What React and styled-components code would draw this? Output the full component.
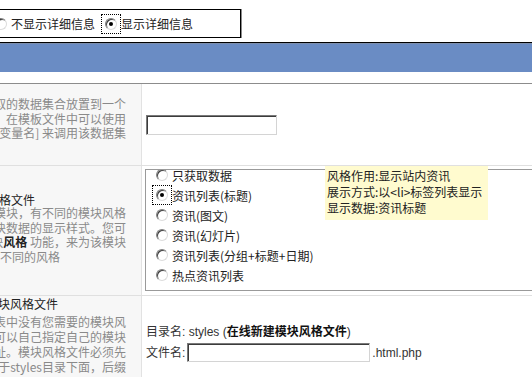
import styled, { createGlobalStyle } from "styled-components";

const GlobalStyle = createGlobalStyle`
  html, body {
    margin: 0;
    padding: 0;
    background: #fff;
    overflow: hidden;
  }
  body {
    font-family: "Liberation Sans", "Noto Sans CJK SC", sans-serif;
    font-size: 12px;
    color: #333;
  }
`;

const Page = styled.div`
  width: 532px;
  height: 377px;
  overflow: hidden;
`;

const TopStrip = styled.div`
  height: 42px;
  padding-top: 9px;
  box-sizing: border-box;
`;

const ModeBox = styled.div`
  margin-left: -12px;
  width: 253px;
  height: 29px;
  box-sizing: border-box;
  border: 1px solid #000;
  box-shadow: 1px 0 0 #8a8a8a;
  display: flex;
  align-items: center;
  padding-left: 2px;
  background: #fff;
`;

const ModeItem = styled.label`
  display: flex;
  align-items: center;
  margin-left: ${(p) => p.$offset || 0}px;
  color: #222;
  white-space: nowrap;
`;

const FocusBox = styled.span`
  display: flex;
  align-items: center;
  justify-content: center;
  flex: none;
  width: 20px;
  height: 20px;
  box-sizing: border-box;
  border: 1px dotted ${(p) => (p.$focus ? "#000" : "transparent")};
`;

const RadioDot = styled.span`
  width: 12px;
  height: 12px;
  box-sizing: border-box;
  border-radius: 50%;
  border: 1px solid;
  border-color: #808080 #dcdcdc #dcdcdc #808080;
  box-shadow: inset 1px 1px 0 #404040;
  background: #fff;
  display: flex;
  align-items: center;
  justify-content: center;

  &::after {
    content: "";
    width: 4px;
    height: 4px;
    border-radius: 50%;
    background: #000;
    display: ${(p) => (p.$checked ? "block" : "none")};
  }
`;

const Radio = ({ checked, focus }) => (
  <FocusBox $focus={focus}>
    <RadioDot $checked={checked} />
  </FocusBox>
);

const Band = styled.div`
  height: 30px;
  border-top: 1px solid #000;
  box-sizing: border-box;
  background: #6a8cc4;
  box-shadow: inset 0 1px 0 #7d8fae;
`;

const Gap = styled.div`
  height: 11px;
`;

const Table = styled.div`
  border-top: 1px solid #8c8c8c;
`;

const Row = styled.div`
  display: grid;
  grid-template-columns: 142px 1fr;
  height: ${(p) => p.$h}px;
  border-bottom: 1px solid #e0e0e0;
`;

const LeftCell = styled.div`
  background: #f7f7f7;
  border-right: 1px solid #e2e2e2;
  overflow: hidden;
  padding: ${(p) => p.$pt}px 15px 0 0;
`;

const RightCell = styled.div`
  position: relative;
  background: #fff;
  padding-left: 4px;
  display: flex;
  flex-direction: column;
  justify-content: ${(p) => (p.$center ? "center" : "flex-start")};
  padding-top: ${(p) => p.$pt || 0}px;
  overflow: hidden;
`;

const LineBox = styled.div`
  display: flex;
  justify-content: ${(p) => (p.$start ? "flex-start" : "flex-end")};
  white-space: nowrap;
  line-height: ${(p) => p.$lh || 14.5}px;
  height: ${(p) => p.$lh || 14.5}px;
  margin-left: ${(p) => p.$shift || 0}px;
  margin-bottom: ${(p) => p.$mb || 0}px;
  color: ${(p) => (p.$label ? "#222" : "#8a8a8a")};
  font-family: "Noto Sans CJK SC", sans-serif;

  b {
    color: #222;
    font-weight: 700;
  }
`;

const Line = ({ children, ...rest }) => (
  <LineBox {...rest}>
    <span>{children}</span>
  </LineBox>
);

const TextInput = styled.div`
  width: ${(p) => p.$w}px;
  height: ${(p) => p.$h}px;
  box-sizing: border-box;
  border: 1px solid;
  border-color: #7a7a7a #d4d4d4 #d4d4d4 #7a7a7a;
  box-shadow: inset 1px 1px 0 #3c3c3c;
  background: #fff;
  flex: none;
`;

const StyleBox = styled.div`
  margin: 3px 0 0 -1px;
  width: 420px;
  height: 122px;
  box-sizing: border-box;
  border: 1px solid #9a9a9a;
  overflow: hidden;
`;

const OptionList = styled.div`
  margin-top: -5px;
  padding-left: 6px;
`;

const Option = styled.div`
  height: 20px;
  display: flex;
  align-items: center;
  color: #222;
  font-family: "Noto Sans CJK SC", sans-serif;
  white-space: nowrap;
`;

const Hint = styled.div`
  position: absolute;
  left: 183px;
  top: 0;
  width: 163px;
  height: 54px;
  padding: 2px 0 0 2px;
  box-sizing: border-box;
  background: #fffbcf;
  color: #222;
  line-height: 16px;
  font-family: "Noto Sans CJK SC", sans-serif;
  white-space: nowrap;
`;

const TextRow = styled.div`
  display: flex;
  align-items: center;
  gap: 2px;
  line-height: 14px;
  color: #333;
  white-space: nowrap;
  margin-top: ${(p) => p.$mt || 0}px;

  b {
    font-family: "Noto Sans CJK SC", sans-serif;
    font-weight: 700;
    color: #111;
  }
`;

const styleOptions = [
  "只获取数据",
  "资讯列表(标题)",
  "资讯(图文)",
  "资讯(幻灯片)",
  "资讯列表(分组+标题+日期)",
  "热点资讯列表",
];

export default function App() {
  return (
    <Page>
      <GlobalStyle />
      <TopStrip>
        <ModeBox>
          <ModeItem>
            <Radio />
            不显示详细信息
          </ModeItem>
          <ModeItem $offset={6}>
            <Radio checked focus />
            显示详细信息
          </ModeItem>
        </ModeBox>
      </TopStrip>
      <Band />
      <Gap />
      <Table>
        <Row $h={81}>
          <LeftCell $pt={13}>
            <Line>将获取的数据集合放置到一个</Line>
            <Line>变量中。在模板文件中可以使用</Line>
            <Line>[变量名] 来调用该数据集</Line>
          </LeftCell>
          <RightCell $center>
            <TextInput $w={131} $h={20} />
          </RightCell>
        </Row>
        <Row $h={129}>
          <LeftCell $pt={28}>
            <Line $start $label $shift={-37} $lh={12}>
              模块风格文件
            </Line>
            <Line>的不同的模块，有不同的模块风格</Line>
            <Line>来控制模块数据的显示样式。您可</Line>
            <Line>
              使用模块<b>风格</b> 功能，来为该模块
            </Line>
            <Line $start>不同的风格</Line>
          </LeftCell>
          <RightCell>
            <StyleBox>
              <OptionList>
                {styleOptions.map((o, i) => (
                  <Option key={o}>
                    <Radio checked={i === 1} focus={i === 1} />
                    {o}
                  </Option>
                ))}
              </OptionList>
            </StyleBox>
            <Hint>
              <div>风格作用:显示站内资讯</div>
              <div>展示方式:以&lt;li&gt;标签列表显示</div>
              <div>显示数据:资讯标题</div>
            </Hint>
          </RightCell>
        </Row>
        <Row $h={120}>
          <LeftCell $pt={1}>
            <Line $start $label $shift={-14} $lh={14} $mb={2.5}>
              模块风格文件
            </Line>
            <Line $lh={15}>如果列表中没有您需要的模块风</Line>
            <Line $lh={15}>格，您可以自己指定自己的模块</Line>
            <Line $lh={15}>风格文件地址。模块风格文件必须先</Line>
            <Line $lh={15}>放置于styles目录下面，后缀</Line>
          </LeftCell>
          <RightCell $pt={28}>
            <TextRow>
              <span>
                目录名: styles (<b>在线新建模块风格文件</b>)
              </span>
            </TextRow>
            <TextRow $mt={4}>
              <span>文件名:</span>
              <TextInput $w={183} $h={19} />
              <span>.html.php</span>
            </TextRow>
          </RightCell>
        </Row>
      </Table>
    </Page>
  );
}
